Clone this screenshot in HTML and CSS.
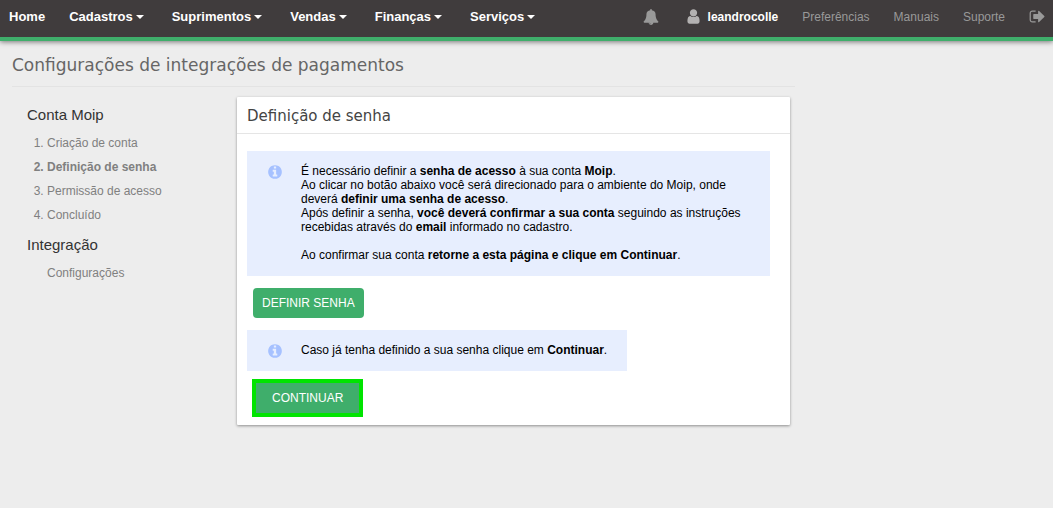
FILE: index.html
```html
<!DOCTYPE html>
<html lang="pt-BR">
<head>
    <meta charset="UTF-8">
    <meta name="viewport" content="width=device-width, initial-scale=1.0">
    <title>Configurações de integrações de pagamentos</title>
    <link rel="stylesheet" href="styles.css">
</head>
<body>
    <header class="topbar">
        <nav class="main-menu">
            <a href="#">Home</a>
            <a href="#" class="has-menu">Cadastros</a>
            <a href="#" class="has-menu">Suprimentos</a>
            <a href="#" class="has-menu">Vendas</a>
            <a href="#" class="has-menu">Finanças</a>
            <a href="#" class="has-menu">Serviços</a>
        </nav>
        <nav class="user-menu">
            <a href="#" aria-label="Notificações">
                <svg class="icon" viewBox="0 0 1792 1792"><path d="M912 1696q0-16-16-16-59 0-101.500-42.500t-42.500-101.500q0-16-16-16t-16 16q0 73 51.500 124.500t124.500 51.500q16 0 16-16zM1728 1408q0 52-38 90t-90 38h-448q0 106-75 181t-181 75-181-75-75-181h-448q-52 0-90-38t-38-90q50-42 91-88t85-119.500 74.500-158.500 50-206 19.500-260q0-152 117-282.500t307-158.500q-8-19-8-39 0-40 28-68t68-28 68 28 28 68q0 20-8 39 190 28 307 158.500t117 282.500q0 139 19.500 260t50 206 74.500 158.500 85 119.500 91 88z"/></svg>
            </a>
            <a href="#" class="user">
                <svg class="icon icon-user" viewBox="0 0 1792 1792"><path d="M1536 1399q0 109-62.500 187t-150.500 78h-854q-88 0-150.500-78t-62.500-187q0-85 8.500-160.500t31.500-152 58.500-131 94-89 134.500-34.500q131 128 313 128t313-128q76 0 134.500 34.500t94 89 58.500 131 31.500 152 8.500 160.500zM1280 512q0 159-112.500 271.500t-271.500 112.500-271.500-112.500-112.500-271.500 112.500-271.500 271.500-112.500 271.500 112.500 112.500 271.500z"/></svg>
                leandrocolle
            </a>
            <a href="#">Preferências</a>
            <a href="#">Manuais</a>
            <a href="#">Suporte</a>
            <a href="#" aria-label="Sair">
                <svg class="icon icon-exit" viewBox="0 0 1792 1792"><path d="M704 1440q0 4 1 20t.5 26.500-3 23.500-10 19.500-20.500 6.500h-320q-119 0-203.500-84.500t-84.500-203.500v-704q0-119 84.500-203.500t203.500-84.500h320q13 0 22.500 9.500t9.500 22.500q0 4 1 20t.5 26.500-3 23.500-10 19.500-20.500 6.500h-320q-66 0-113 47t-47 113v704q0 66 47 113t113 47h312l11.500 1 11.500 3 8 5.500 7 9 2 13.500zM1632 896q0 26-19 45l-544 544q-19 19-45 19t-45-19-19-45v-288h-448q-26 0-45-19t-19-45v-384q0-26 19-45t45-19h448v-288q0-26 19-45t45-19 45 19l544 544q19 19 19 45z"/></svg>
            </a>
        </nav>
    </header>

    <div class="page">
        <h1 class="page-title">Configurações de integrações de pagamentos</h1>

        <div class="columns">
            <aside class="sidebar">
                <h2>Conta Moip</h2>
                <ol>
                    <li><a href="#">Criação de conta</a></li>
                    <li class="current"><a href="#">Definição de senha</a></li>
                    <li><a href="#">Permissão de acesso</a></li>
                    <li><a href="#">Concluído</a></li>
                </ol>
                <h2>Integração</h2>
                <ul>
                    <li><a href="#">Configurações</a></li>
                </ul>
            </aside>

            <main class="panel">
                <h2 class="panel-title">Definição de senha</h2>
                <div class="panel-body">
                    <div class="info">
                        <svg class="icon icon-info" viewBox="0 0 1792 1792"><path d="M1152 1376v-160q0-14-9-23t-23-9h-96v-512q0-14-9-23t-23-9h-320q-14 0-23 9t-9 23v160q0 14 9 23t23 9h96v320h-96q-14 0-23 9t-9 23v160q0 14 9 23t23 9h448q14 0 23-9t9-23zM1024 480v-160q0-14-9-23t-23-9h-192q-14 0-23 9t-9 23v160q0 14 9 23t23 9h192q14 0 23-9t9-23zM1664 896q0 209-103 385.500t-279.500 279.500-385.500 103-385.500-103-279.500-279.500-103-385.500 103-385.500 279.500-279.500 385.500-103 385.500 103 279.500 279.500 103 385.500z"/></svg>
                        <div>
                            <p>É necessário definir a <b>senha de acesso</b> à sua conta <b>Moip</b>.</p>
                            <p>Ao clicar no botão abaixo você será direcionado para o ambiente do Moip, onde deverá <b>definir uma senha de acesso</b>.</p>
                            <p>Após definir a senha, <b>você deverá confirmar a sua conta</b> seguindo as instruções recebidas através do <b>email</b> informado no cadastro.</p>
                            <p class="info-end">Ao confirmar sua conta <b>retorne a esta página e clique em Continuar</b>.</p>
                        </div>
                    </div>

                    <button type="button" class="btn">DEFINIR SENHA</button>

                    <div class="info">
                        <svg class="icon icon-info" viewBox="0 0 1792 1792"><path d="M1152 1376v-160q0-14-9-23t-23-9h-96v-512q0-14-9-23t-23-9h-320q-14 0-23 9t-9 23v160q0 14 9 23t23 9h96v320h-96q-14 0-23 9t-9 23v160q0 14 9 23t23 9h448q14 0 23-9t9-23zM1024 480v-160q0-14-9-23t-23-9h-192q-14 0-23 9t-9 23v160q0 14 9 23t23 9h192q14 0 23-9t9-23zM1664 896q0 209-103 385.500t-279.500 279.500-385.500 103-385.500-103-279.500-279.500-103-385.500 103-385.500 279.500-279.500 385.500-103 385.500 103 279.500 279.500 103 385.500z"/></svg>
                        <p>Caso já tenha definido a sua senha clique em <b>Continuar</b>.</p>
                    </div>

                    <button type="button" class="btn btn-highlight">CONTINUAR</button>
                </div>
            </main>
        </div>
    </div>
</body>
</html>
```

FILE: styles.css
```css
* {
    box-sizing: border-box;
}

body {
    margin: 0;
    background: #ededed;
    color: #000;
    font: 12px/14px "Liberation Sans", Arial, sans-serif;
}

a {
    color: inherit;
    text-decoration: none;
}

h1, h2, p, ol, ul {
    margin: 0;
    padding: 0;
    font-weight: normal;
}

.icon {
    display: block;
    flex: none;
    width: 16px;
    height: 16px;
    fill: currentColor;
}

/* Top bar */
.topbar {
    display: flex;
    justify-content: space-between;
    height: 41px;
    padding: 0 7px 4px 9px;
    background: #403c3d;
    border-bottom: 4px solid #3fae6b;
    box-shadow: 0 1px 5px rgba(0,0,0,0.5);
}

.main-menu,
.user-menu {
    display: flex;
    align-items: center;
    gap: 24px;
}

.main-menu {
    color: #fff;
    font-size: 13px;
    font-weight: bold;
}

.has-menu {
    display: flex;
    align-items: center;
    gap: 3px;
    padding-right: 4px;
}

.has-menu::after {
    content: '';
    border: 4px solid transparent;
    border-top-color: #fff;
    border-bottom: 0;
}

.user-menu {
    color: #999;
}

.user {
    display: flex;
    align-items: center;
    gap: 6px;
    padding-left: 2px;
    color: #fff;
    font-weight: bold;
}

.icon-user,
.icon-exit {
    width: 17px;
    height: 17px;
}

.icon-user {
    color: #b3b1b1;
}

/* Page */
.page {
    max-width: 807px;
    padding: 0 12px 20px;
}

.page-title {
    padding: 12px 0 9px;
    border-bottom: 1px solid #e3e3e3;
    color: #666;
    font: 17px/24px "DejaVu Sans", sans-serif;
}

.columns {
    display: flex;
    align-items: flex-start;
    padding: 10px 5px 0 15px;
}

.sidebar {
    flex: none;
    width: 210px;
    color: #808080;
    line-height: 24px;
}

.sidebar h2 {
    padding: 6px 0 4px;
    color: #333;
    font-size: 15px;
}

.sidebar ol,
.sidebar ul {
    padding-left: 20px;
}

.sidebar ul {
    list-style: none;
}

.current {
    font-weight: bold;
}

/* Panel */
.panel {
    flex: 1;
    background: #fff;
    border-radius: 1px;
    box-shadow: 0 1px 3px rgba(0,0,0,0.4);
}

.panel-title {
    padding: 7px 10px 5px;
    border-bottom: 1px solid #e5e5e5;
    color: #444;
    font: 15px/24px "DejaVu Sans", sans-serif;
}

.panel-body {
    display: flex;
    flex-direction: column;
    align-items: flex-start;
    padding: 17px 20px 8px 10px;
}

.info {
    display: flex;
    gap: 18px;
    padding: 13px 20px 14px;
    background: #e7eefe;
}

.info-end {
    margin-top: 14px;
}

/* taller than the text line, must not stretch a one-line box */
.icon-info {
    margin-bottom: -2px;
    color: #a6c1ff;
}

.btn {
    margin: 12px 6px;
    padding: 8px 9px;
    border: 0;
    border-radius: 4px;
    background: #3fae6b;
    color: #fff;
    font: inherit;
}

.btn-highlight {
    margin: 8px 5px 0;
    padding: 8px 16px;
    border: 4px solid #00e400;
    border-radius: 0;
}
```
